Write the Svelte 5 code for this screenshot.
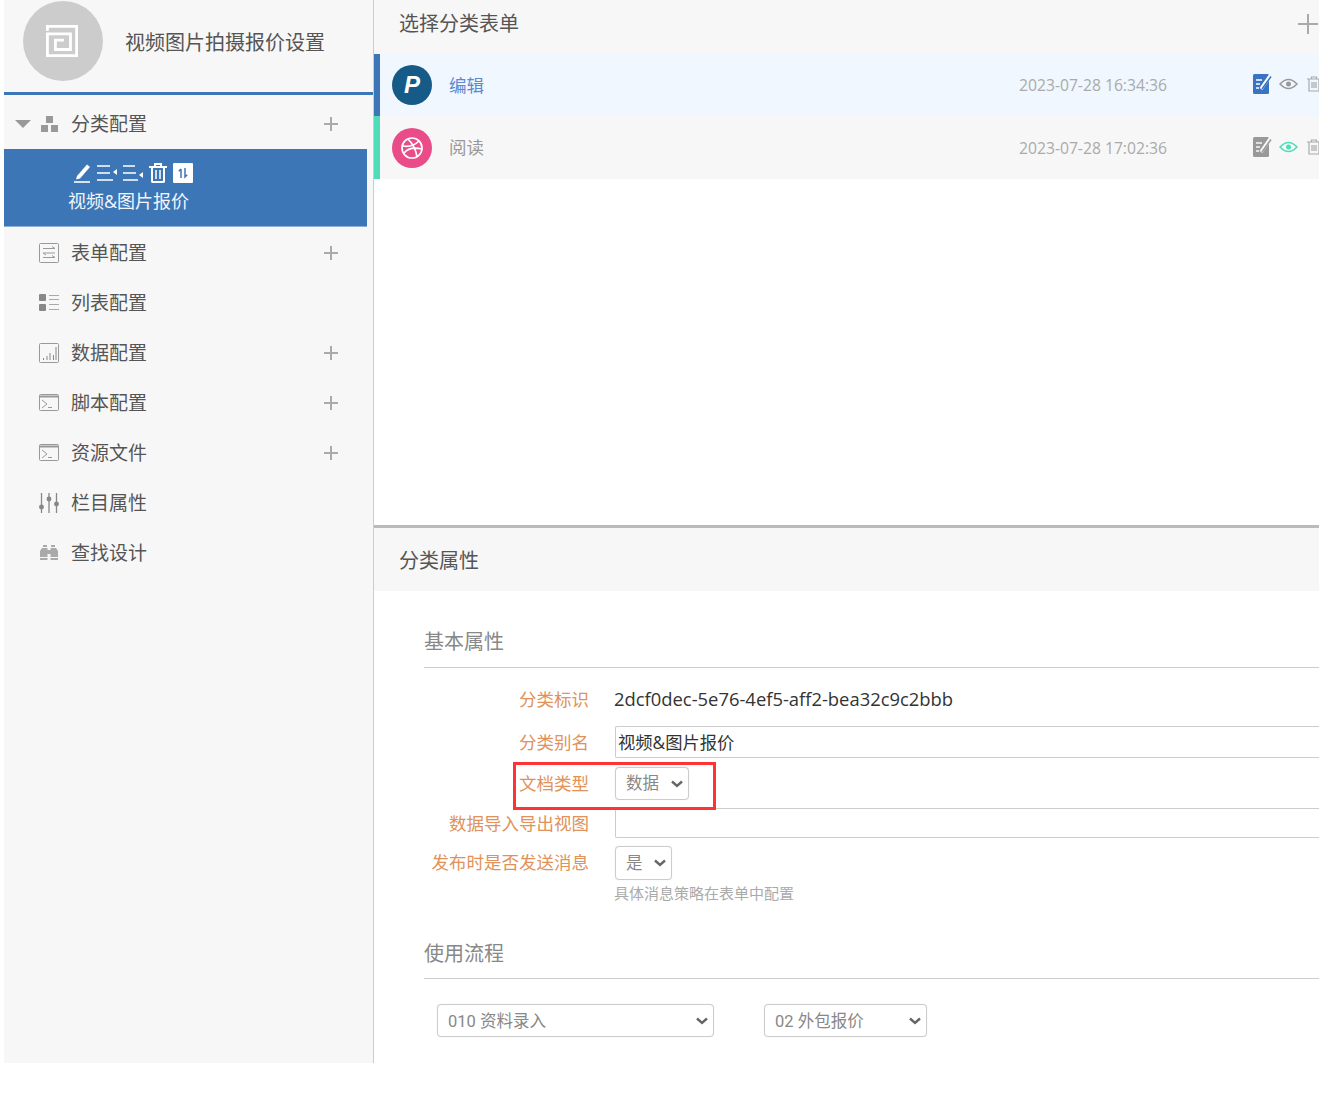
<script>
  const menu = [
    { name: '表单配置', icon: 'form', plus: true },
    { name: '列表配置', icon: 'list', plus: false },
    { name: '数据配置', icon: 'chart', plus: true },
    { name: '脚本配置', icon: 'term', plus: true },
    { name: '资源文件', icon: 'term', plus: true },
    { name: '栏目属性', icon: 'sliders', plus: false },
    { name: '查找设计', icon: 'binoc', plus: false }
  ];
</script>

<div class="page">
  <aside class="side">
    <div class="brand">
      <div class="avatar">
        <svg width="32" height="32" viewBox="0 0 34 34" fill="none" stroke="#fff" stroke-width="3">
          <path d="M1.500 6V1.500H32.500V32.500H1.500V9.500H26V26H10V16H19" />
        </svg>
      </div>
      <div class="brand-name">视频图片拍摄报价设置</div>
    </div>
    <div class="tree-head">
      <span class="caret"></span>
      <svg class="ico-small" width="18" height="18" viewBox="0 0 18 18" fill="#999"><rect x="6" y="1" width="7" height="7"/><rect x="1" y="10" width="7" height="7"/><rect x="11" y="10" width="7" height="7"/></svg>
      <span class="m-text">分类配置</span>
      <span class="plus"></span>
    </div>
    <div class="tree-node">
      <div class="tools">
        <svg width="17" height="20" viewBox="0 0 17 20" fill="none" stroke="#fff"><path d="M3 13 13 1.500l3 2.500L6 15.500 2 16.500Z" fill="#fff" stroke="none"/><path d="M0 19H16" stroke-width="1.600"/></svg>
        <svg width="20" height="20" viewBox="0 0 20 20" fill="none" stroke="#fff" stroke-width="1.600"><path d="M0 3H13M0 10H13M0 17H16"/><path d="M20 6v6l-4-3Z" fill="#fff" stroke="none"/></svg>
        <svg width="20" height="20" viewBox="0 0 20 20" fill="none" stroke="#fff" stroke-width="1.600"><path d="M0 3H12M0 10H13M0 17H15"/><path d="M20 9v6l-4-3Z" fill="#fff" stroke="none"/></svg>
        <svg width="18" height="20" viewBox="0 0 18 20" fill="none" stroke="#fff" stroke-width="2"><path d="M0 4H18M6 3V1H12V3M3 5V18.500Q3 19 4 19H14Q15 19 15 18.500V5"/><path d="M7 7V16M11 7V16" stroke-width="1.500"/></svg>
        <span class="sort"><svg width="12" height="12" viewBox="0 0 12 12" fill="none" stroke="#3c76b7" stroke-width="1.500"><path d="M4 11V2M1.800 4.200 4 2M8 1V10L10.200 7.800"/></svg></span>
      </div>
      <div class="node-label">视频&amp;图片报价</div>
    </div>
    {#each menu as m}
      <div class="m-row">
        <span class="m-ico">
          {#if m.icon === 'form'}
            <svg width="20" height="20" viewBox="0 0 20 20" fill="none" stroke="#999"><rect x=".5" y=".5" width="19" height="19" rx="1"/><path d="M4 5.500H16M13 3.500 16 5.500M4 10H16M4 10 7 12M4 14.500H16M13 12.500 16 14.500"/></svg>
          {:else if m.icon === 'list'}
            <svg width="20" height="18" viewBox="0 0 20 18" fill="none" stroke="#aaa"><rect x="0" y="0" width="7" height="7" rx="1" fill="#888" stroke="none"/><rect x="0" y="10" width="7" height="7" rx="1" fill="#888" stroke="none"/><path d="M10 1.500H20M10 5.500H20M10 10.500H20M10 15.500H20"/></svg>
          {:else if m.icon === 'chart'}
            <svg width="20" height="20" viewBox="0 0 20 20" fill="none" stroke="#999"><rect x=".5" y=".5" width="19" height="19" rx="1"/><path d="M4.500 17V15M8 17V13M11 17V10M14.500 17V12M17 17V4" stroke="#888"/></svg>
          {:else if m.icon === 'term'}
            <svg width="20" height="18" viewBox="0 0 20 18" fill="none" stroke="#999"><rect x=".5" y=".5" width="19" height="16" rx="1"/><path d="M1 2.500H19" stroke-width="2"/><path d="M3 6l5 4-5 4M9 13.500H13"/></svg>
          {:else if m.icon === 'sliders'}
            <svg width="20" height="20" viewBox="0 0 20 20" fill="#888" stroke="#888" stroke-width="1.300"><path d="M2.500 0V20M10 0V20M17.500 0V20"/><circle cx="2.500" cy="14" r="1.800"/><circle cx="10" cy="6" r="1.800"/><circle cx="17.500" cy="11" r="1.800"/></svg>
          {:else}
            <svg width="18" height="16" viewBox="0 0 18 16" fill="#aaa"><path d="M0 12V6L2 3H7.500V12ZM18 12V6L16 3H10.500V12ZM7.500 5H10.500V9H7.500ZM0 13H7.500V15H0ZM10.500 13H18V15H10.500Z"/><rect x="3" y="0" width="4" height="2"/><rect x="11" y="0" width="4" height="2"/></svg>
          {/if}
        </span>
        <span class="m-text">{m.name}</span>
        {#if m.plus}<span class="plus"></span>{/if}
      </div>
    {/each}
  </aside>

  <main class="main">
    <div class="top">
      <div class="bar bar-top">
        <span>选择分类表单</span>
        <svg class="bar-plus" width="20" height="20" viewBox="0 0 20 20" stroke="#aaa" stroke-width="2"><path d="M0 10H20M10 0V20"/></svg>
      </div>
      <div class="row row-blue">
        <span class="badge badge-p"><span class="p">P</span></span>
        <span class="row-name blue">编辑</span>
        <span class="row-date">2023-07-28 16:34:36</span>
        <span class="row-tools">
          <svg width="19" height="20" viewBox="0 0 19 20"><rect x="0" y="0" width="16" height="20" rx="1.500" fill="#3b73c4"/><path d="M3 6H9M3 10H7M3 14H6" stroke="#fff" stroke-width="1.600"/><path d="M8 15 17 2" stroke="#fff" stroke-width="3.500"/><path d="M9 15 18 2.500" stroke="#3b73c4" stroke-width="1.500"/></svg>
          <svg width="19" height="12" viewBox="0 0 19 12" fill="none" stroke="#999" stroke-width="1.500"><path d="M1 6Q9.500-3 18 6 9.500 15 1 6Z"/><circle cx="9.500" cy="6" r="2.500" fill="#999" stroke="none"/></svg>
          <svg class="t-del" width="14" height="16" viewBox="0 0 14 16" fill="none" stroke="#aaa" stroke-width="1.200"><path d="M0 3H14M4.500 3V1H9.500V3M2 3V15H12V3M5 6V12M7 6V12M9 6V12"/></svg>
        </span>
      </div>
      <div class="row row-green">
        <span class="badge badge-d">
          <svg width="24" height="24" viewBox="0 0 24 24" fill="none" stroke="#fff" stroke-width="1.700"><circle cx="12" cy="12" r="10"/><path d="M8 3C12 7 16 14 17 21M3 10C9 11 15 9 19 5M4 17C8 12 14 11 22 13"/></svg>
        </span>
        <span class="row-name">阅读</span>
        <span class="row-date">2023-07-28 17:02:36</span>
        <span class="row-tools">
          <svg width="19" height="20" viewBox="0 0 19 20"><rect x="0" y="0" width="16" height="20" rx="1.500" fill="#999"/><path d="M3 6H9M3 10H7M3 14H6" stroke="#f7f7f7" stroke-width="1.600"/><path d="M8 15 17 2" stroke="#f7f7f7" stroke-width="3.500"/><path d="M9 15 18 2.500" stroke="#999" stroke-width="1.500"/></svg>
          <svg width="19" height="12" viewBox="0 0 19 12" fill="none" stroke="#4fdcb8" stroke-width="1.500"><path d="M1 6Q9.500-3 18 6 9.500 15 1 6Z"/><circle cx="9.500" cy="6" r="2.500" fill="#4fdcb8" stroke="none"/></svg>
          <svg class="t-del" width="14" height="16" viewBox="0 0 14 16" fill="none" stroke="#aaa" stroke-width="1.200"><path d="M0 3H14M4.500 3V1H9.500V3M2 3V15H12V3M5 6V12M7 6V12M9 6V12"/></svg>
        </span>
      </div>
    </div>

    <section class="props">
      <div class="bar bar-props">分类属性</div>
      <div class="content">
        <h3 class="sec">基本属性</h3>
        <div class="f f-id">
          <label>分类标识</label>
          <span class="value">2dcf0dec-5e76-4ef5-aff2-bea32c9c2bbb</span>
        </div>
        <div class="f f-alias">
          <label>分类别名</label>
          <div class="input">视频&amp;图片报价</div>
        </div>
        <div class="f f-type">
          <div class="highlight"></div>
          <label>文档类型</label>
          <div class="sel sel-type">数据<svg class="chev" width="12" height="8" viewBox="0 0 12 8" fill="none" stroke="#666" stroke-width="2.400"><path d="M1 1.500l5 4.500 5-4.500"/></svg></div>
        </div>
        <div class="f f-view">
          <label>数据导入导出视图</label>
          <div class="input input-empty"></div>
        </div>
        <div class="f f-msg">
          <label>发布时是否发送消息</label>
          <div class="sel sel-yes">是<svg class="chev" width="12" height="8" viewBox="0 0 12 8" fill="none" stroke="#666" stroke-width="2.400"><path d="M1 1.500l5 4.500 5-4.500"/></svg></div>
        </div>
        <div class="hint">具体消息策略在表单中配置</div>

        <h3 class="sec sec-flow">使用流程</h3>
        <div class="flow">
          <div class="sel sel-a">010 资料录入<svg class="chev" width="12" height="8" viewBox="0 0 12 8" fill="none" stroke="#666" stroke-width="2.400"><path d="M1 1.500l5 4.500 5-4.500"/></svg></div>
          <div class="sel sel-b">02 外包报价<svg class="chev" width="12" height="8" viewBox="0 0 12 8" fill="none" stroke="#666" stroke-width="2.400"><path d="M1 1.500l5 4.500 5-4.500"/></svg></div>
        </div>
      </div>
    </section>
  </main>
</div>

<style>
  :global(body) {
    margin: 0;
    background: #fff;
    overflow: hidden;
  }
  .page {
    display: flex;
    width: 1319px;
    height: 1063px;
    padding-left: 4px;
    box-sizing: border-box;
    overflow: hidden;
    font-family: "Open Sans", "Noto Sans CJK SC", sans-serif;
    font-size: 16px;
    color: #555;
  }
  .side {
    width: 370px;
    flex: none;
    background: #f7f7f7;
    border-right: 1px solid #ccc;
    box-sizing: border-box;
  }
  .brand {
    height: 95px;
    box-sizing: border-box;
    border-bottom: 3px solid #3c76b7;
    display: flex;
    align-items: flex-start;
    padding-left: 19px;
    padding-top: 1px;
  }
  .avatar {
    width: 80px;
    height: 80px;
    border-radius: 50%;
    background: #ccc;
    display: flex;
    align-items: center;
    justify-content: center;
    padding-right: 2px;
    box-sizing: border-box;
  }
  .brand-name {
    margin: 29px 0 0 22px;
    font-size: 20px;
    line-height: 26px;
    color: #555;
  }
  .tree-head {
    height: 54px;
    box-sizing: border-box;
    padding: 4px 35px 0 11px;
    display: flex;
    align-items: center;
  }
  .caret {
    width: 0;
    height: 0;
    border-left: 8px solid transparent;
    border-right: 8px solid transparent;
    border-top: 8px solid #999;
    margin-right: 9px;
  }
  .ico-small { margin-right: 13px; }
  .m-text {
    font-size: 19px;
    line-height: 26px;
    color: #555;
  }
  .plus {
    margin-left: auto;
    width: 14px;
    height: 14px;
    background:
      linear-gradient(#aaa, #aaa) center / 14px 2px no-repeat,
      linear-gradient(#aaa, #aaa) center / 2px 14px no-repeat;
  }
  .tree-node {
    width: 363px;
    height: 78px;
    background: #3c76b7;
    color: #fff;
    border-bottom: 1px solid #8fb0d6;
    box-sizing: border-box;
    padding: 14px 0 0 70px;
  }
  .tools {
    display: flex;
    align-items: center;
    gap: 6px;
    height: 20px;
  }
  .sort {
    width: 20px;
    height: 20px;
    background: #fff;
    border-radius: 1px;
    display: flex;
    align-items: center;
    justify-content: center;
  }
  .node-label {
    font-size: 18px;
    line-height: 22px;
    margin-top: 7px;
    margin-left: -6px;
    color: #f2f6fb;
  }
  .m-row {
    height: 50px;
    display: flex;
    align-items: center;
    padding: 0 35px;
  }
  .tree-node + .m-row { margin-top: 1px; }
  .m-ico {
    width: 20px;
    height: 20px;
    margin-right: 12px;
    display: flex;
    align-items: center;
    justify-content: center;
  }
  .main {
    flex: none;
    width: 945px;
    display: flex;
    flex-direction: column;
    background: #fff;
  }
  .top {
    height: 525px;
    flex: none;
    border-bottom: 3px solid #bbb;
  }
  .bar {
    background: #f7f7f7;
    display: flex;
    align-items: center;
    padding-left: 25px;
    font-size: 20px;
    color: #555;
  }
  .bar-top {
    height: 54px;
    justify-content: space-between;
    padding-bottom: 10px;
    box-sizing: border-box;
  }
  .bar-plus { margin-right: 1px; margin-top: 4px; }
  .bar-props { height: 63px; }
  .row {
    display: flex;
    align-items: center;
    height: 62px;
    border-left: 6px solid #3c76b7;
    box-sizing: border-box;
    padding-left: 12px;
    white-space: nowrap;
  }
  .row-blue { background: #f0f7ff; }
  .row-green { background: #f7f7f7; border-left-color: #4fdcb8; height: 63px; }
  .badge {
    width: 40px;
    height: 40px;
    border-radius: 50%;
    flex: none;
    display: flex;
    align-items: center;
    justify-content: center;
  }
  .badge-p { background: #165b87; }
  .p {
    color: #fff;
    font: italic 700 24px/1 "Liberation Sans", sans-serif;
  }
  .badge-d { background: #ea4c89; }
  .row-name {
    margin: 0 0 2px 17px;
    flex: 0 0 570px;
    font-size: 17.500px;
    color: #999;
  }
  .row-name.blue { color: #5b8ad0; }
  .row-date {
    flex: 0 0 234px;
    font-size: 15.700px;
    color: #aaa;
  }
  .row-tools {
    display: flex;
    align-items: center;
    gap: 7px;
    flex: none;
    margin-bottom: 2px;
  }
  .t-del { margin-left: 2px; }
  .content { padding: 0 0 0 50px; }
  .sec {
    margin: 0;
    font-weight: 400;
    font-size: 20px;
    line-height: 26px;
    color: #888;
    height: 77px;
    box-sizing: border-box;
    padding-top: 38px;
    border-bottom: 1px solid #ccc;
  }
  .f {
    display: flex;
    align-items: center;
    position: relative;
  }
  label {
    width: 165px;
    text-align: right;
    flex: none;
    color: #e0925a;
    font-size: 17.500px;
    margin-right: 26px;
    white-space: nowrap;
  }
  .f-type label, .f-view label { margin-bottom: 2px; }
  .f-msg label { margin-bottom: 4px; }
  .value { font-size: 18.400px; color: #333; margin-left: -1px; }
  .f-id { height: 57px; padding-top: 4px; box-sizing: border-box; }
  .f-alias { height: 33px; }
  .input {
    flex: 1;
    height: 32px;
    box-sizing: border-box;
    border: 1px solid #ccc;
    border-right: 0;
    border-radius: 2px 0 0 2px;
    font-size: 17.300px;
    line-height: 32px;
    color: #333;
    padding-left: 2px;
  }
  .f-type { height: 50px; }
  .highlight {
    position: absolute;
    z-index: 2;
    left: 89px;
    top: 4px;
    width: 203px;
    height: 48px;
    border: 3px solid #f33;
    box-sizing: border-box;
    pointer-events: none;
  }
  .sel {
    height: 33px;
    border: 1px solid #ccc;
    border-radius: 4px;
    box-sizing: border-box;
    background: #fff;
    display: flex;
    align-items: center;
    color: #888;
    font-family: Roboto, "Noto Sans CJK SC", sans-serif;
    font-size: 16.500px;
    padding: 0 0 2px 10px;
    position: relative;
    box-shadow: 0 0 1px #ddd;
  }
  .chev { position: absolute; right: 5px; top: 12px; }
  .sel-type { width: 74px; }
  .sel-yes { width: 57px; height: 34px; }
  .f-view { height: 30px; }
  .input-empty { height: 30px; }
  .f-msg { height: 50px; }
  .hint {
    margin: -5px 0 0 190px;
    font-size: 15px;
    line-height: 20px;
    color: #aaa;
  }
  .sec-flow { height: 76px; }
  .flow {
    display: flex;
    gap: 50px;
    padding: 25px 0 0 13px;
  }
  .sel-a { width: 277px; }
  .sel-b { width: 163px; }
</style>
